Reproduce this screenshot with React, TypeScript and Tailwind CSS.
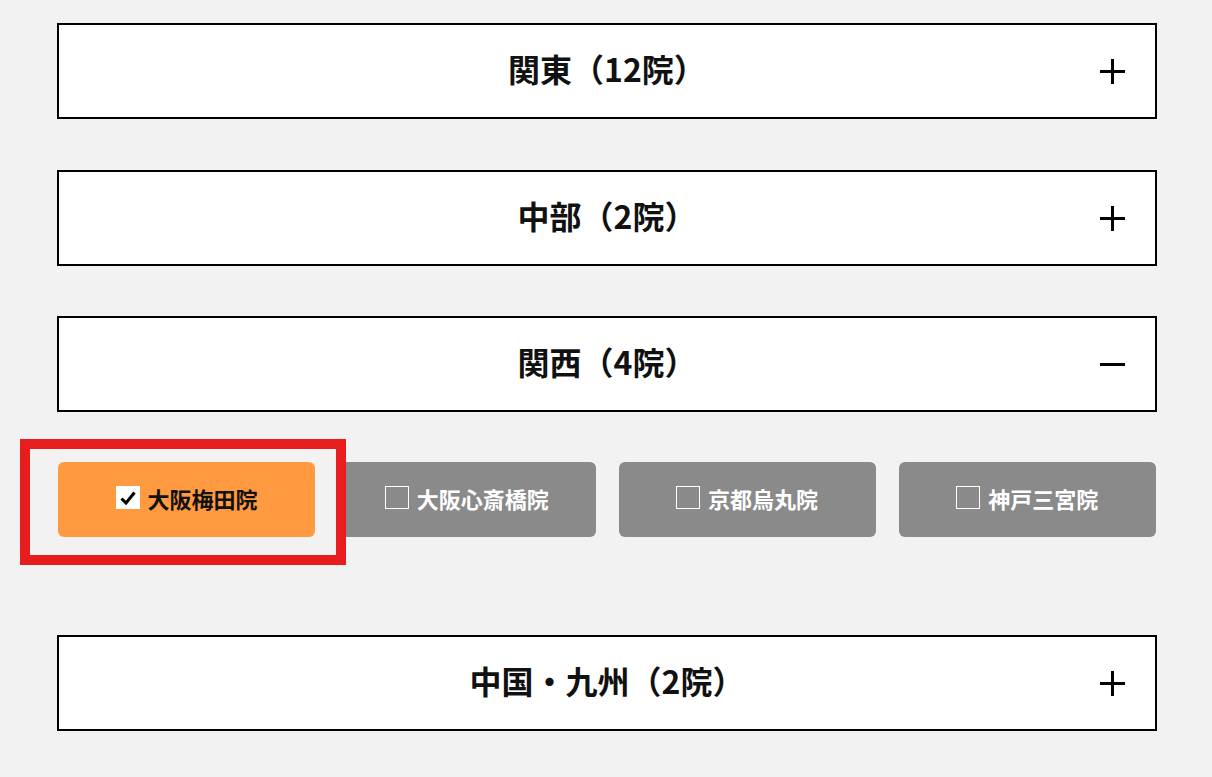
import { Fragment } from "react"

const regions = [
  { name: "関東（12院）", open: false },
  { name: "中部（2院）", open: false },
  { name: "関西（4院）", open: true },
  { name: "中国・九州（2院）", open: false },
]

const clinics = [
  { name: "大阪梅田院", checked: true },
  { name: "大阪心斎橋院", checked: false },
  { name: "京都烏丸院", checked: false },
  { name: "神戸三宮院", checked: false },
]

function Toggle({ open }: { open: boolean }) {
  return (
    <svg width="25" height="25" viewBox="0 0 25 25" className="block">
      <line x1="0" y1="12.5" x2="25" y2="12.5" stroke="#000" strokeWidth="3" />
      {!open && <line x1="12.5" y1="0" x2="12.5" y2="25" stroke="#000" strokeWidth="3" />}
    </svg>
  )
}

function RegionHeader({ name, open }: { name: string; open: boolean }) {
  return (
    <button className="grid grid-cols-[1fr_auto_1fr] items-center h-[96px] w-full bg-white border-2 border-[#000] px-[30px]">
      <span />
      <span className="text-[32px] font-bold text-[#111] leading-none mb-[6px]">{name}</span>
      <span className="flex justify-end">
        <Toggle open={open} />
      </span>
    </button>
  )
}

function ClinicButton({ name, checked }: { name: string; checked: boolean }) {
  return (
    <div
      className={
        checked
          ? "flex items-center justify-center gap-2 h-[75px] pb-[4px] rounded-[6px] bg-[#ff9a40] text-[#111]"
          : "flex items-center justify-center gap-2 h-[75px] pb-[4px] rounded-[6px] bg-[#8a8a8a] text-white"
      }
    >
      {checked ? (
        <span className="flex items-center justify-center w-[24px] h-[23px] bg-white">
          <svg width="16" height="14" viewBox="0 0 16 14">
            <path d="M1.5 7.5 L6 12 L14.5 1.5" fill="none" stroke="#000" strokeWidth="3" />
          </svg>
        </span>
      ) : (
        <span className="w-[24px] h-[23px] border border-white" />
      )}
      <span className="text-[22px] font-bold leading-none">{name}</span>
    </div>
  )
}

export default function App() {
  return (
    <div
      className="relative min-h-[777px] bg-[#f2f2f2]"
      style={{ fontFamily: '"Noto Sans CJK JP", "Noto Sans", sans-serif' }}
    >
      <div className="ml-[57px] w-[1100px] pt-[23px] flex flex-col">
        {regions.map((r, i) => (
          <Fragment key={r.name}>
            <div className={i === 0 ? "" : i === 1 ? "mt-[51px]" : i === 3 ? "mt-[98px]" : "mt-[50px]"}>
              <RegionHeader name={r.name} open={r.open} />
            </div>
            {r.open && (
              <div className="mt-[50px] grid grid-cols-4 gap-[23px] px-px">
                {clinics.map((c) => (
                  <ClinicButton key={c.name} name={c.name} checked={c.checked} />
                ))}
              </div>
            )}
          </Fragment>
        ))}
      </div>

      {/* highlight frame */}
      <div className="absolute left-[20px] top-[439px] w-[326px] h-[126px] border-[10px] border-[#e81e1e]" />
    </div>
  )
}
